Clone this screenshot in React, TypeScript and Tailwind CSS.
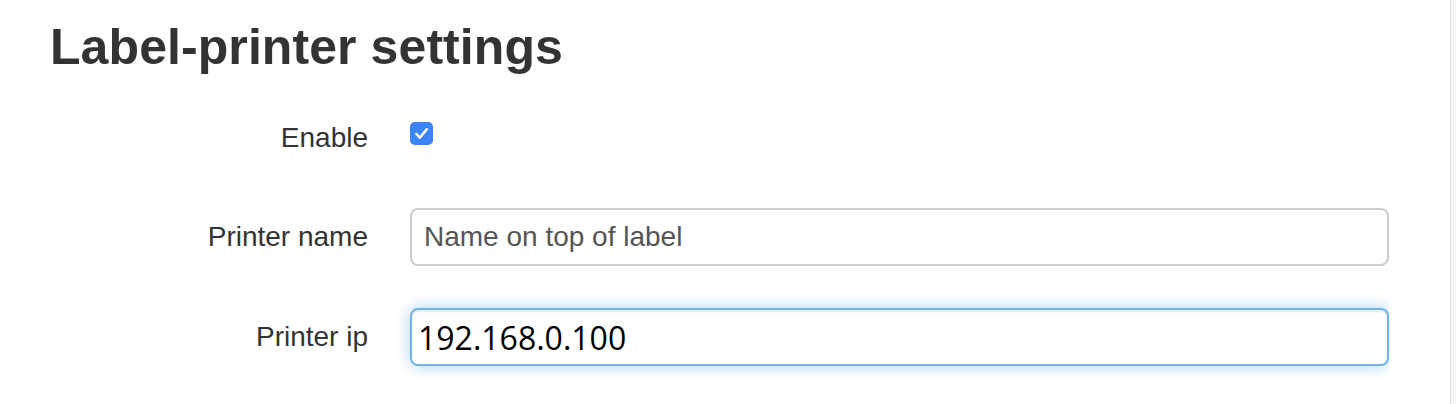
import { useState } from 'react'

function CheckMark() {
  return (
    <svg viewBox="0 0 24 24" className="h-[23px] w-[23px]">
      <rect x="0" y="0" width="24" height="24" rx="5" fill="#3c83f6" />
      <path d="M6.5 12.5 L10.2 16.4 L17.5 7.6" fill="none" stroke="#fff" strokeWidth="2.6" strokeLinecap="round" strokeLinejoin="round" />
    </svg>
  )
}

export default function App() {
  const [name, setName] = useState('')
  const [ip, setIp] = useState('192.168.0.100')

  return (
    <div className="flex h-[404px] w-full bg-white text-[#333] font-['Liberation_Sans',Arial,sans-serif] overflow-hidden">
      <div className="flex-1 pl-[50px]">
        <h1 className="mt-[22px] text-[50px] font-bold leading-[50px] tracking-[0.08px]">Label-printer settings</h1>

        {/* Enable */}
        <div className="mt-[35px] flex h-[58px] items-center">
          <div className="mt-[4px] w-[318px] text-right text-[28px]">Enable</div>
          <div className="ml-[42px] -mt-[6px] flex items-center">
            <CheckMark />
          </div>
        </div>

        {/* Printer name */}
        <div className="mt-[43px] flex h-[58px] items-center">
          <label className="w-[318px] text-right text-[28px]">Printer name</label>
          <input
            value={name}
            onChange={(e) => setName(e.target.value)}
            placeholder="Name on top of label"
            className="ml-[42px] h-[58px] w-[979px] rounded-[8px] border-2 border-[#cccccc] bg-white px-[12px] text-[28px] text-[#555] outline-none placeholder:text-[#555] font-['Liberation_Sans',Arial,sans-serif]"
          />
        </div>

        {/* Printer ip */}
        <div className="mt-[42px] flex h-[58px] items-center">
          <label className="w-[318px] text-right text-[28px]">Printer ip</label>
          <div className="ml-[42px] [clip-path:inset(-24px_0_-24px_-24px)]">
            <input
              value={ip}
              onChange={(e) => setIp(e.target.value)}
              className="block h-[58px] w-[979px] rounded-[8px] border-2 border-[#6db3ee] bg-white px-[6px] text-[32px] text-black outline-none shadow-[inset_0_2px_2px_rgba(0,0,0,0.075),0_0_16px_rgba(102,175,233,0.55)] font-['Open_Sans',sans-serif]"
            />
          </div>
        </div>
      </div>
      <div className="w-[6px] border-l border-[#e2e2e2] bg-[#f5f5f5]" />
    </div>
  )
}
